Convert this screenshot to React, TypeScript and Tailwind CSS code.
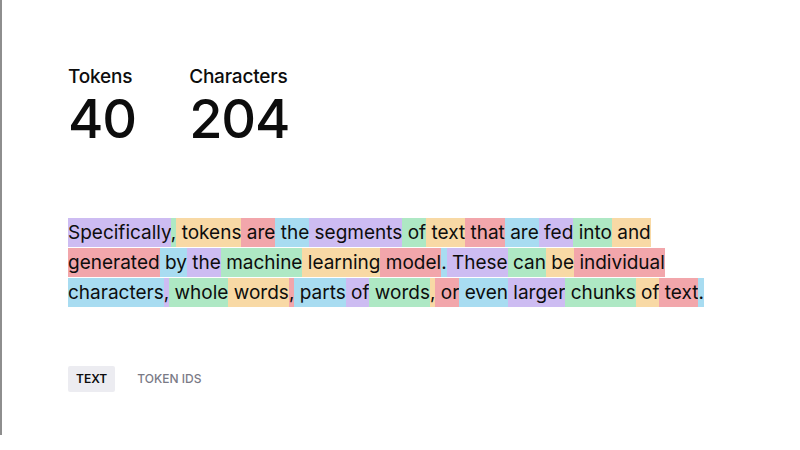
const COLORS = [
  "bg-[#cdbcf2]",
  "bg-[#aee8c4]",
  "bg-[#f8d9a5]",
  "bg-[#f2a6ab]",
  "bg-[#a8dcf1]",
];

const TOKENS = [
  "Specifically", ",", " tokens", " are", " the", " segments", " of", " text", " that", " are",
  " fed", " into", " and", " generated", " by", " the", " machine", " learning", " model", ".",
  " These", " can", " be", " individual", " characters", ",", " whole", " words", ",", " parts",
  " of", " words", ",", " or", " even", " larger", " chunks", " of", " text", ".",
];

function Stat({ label, value }: { label: string; value: string }) {
  return (
    <div className="flex flex-col">
      <span className="text-[19px] font-medium leading-[24px] tracking-[-0.01em]">{label}</span>
      <span className="text-[54px] font-medium leading-[60px] tracking-[-0.02em]">{value}</span>
    </div>
  );
}

export default function App() {
  return (
    <div
      className="h-[450px] w-[800px] bg-white text-[#0d0d0d]"
      style={{ fontFamily: "Inter, 'Liberation Sans', sans-serif" }}
    >
      <div className="h-[435px] border-l-2 border-[#8e8e8e] pl-[66px] pt-[65px]">
        <div className="flex gap-[53px]">
          <Stat label="Tokens" value="40" />
          <Stat label="Characters" value="204" />
        </div>

        <div className="mt-[69px] w-[660px] text-[19px] leading-[30px]">
          {TOKENS.map((t, i) => (
            <span key={i} className={COLORS[i % 5] + " py-[3px]"}>
              {t}
            </span>
          ))}
        </div>

        <div className="mt-[58px] flex gap-[14px] text-[12px] font-semibold">
          <button className="rounded-[2px] bg-[#ececf1] px-[8px] py-[4px] text-[#0d0d0d]">TEXT</button>
          <button className="px-[8px] py-[4px] font-medium text-[#7a7a86]">TOKEN IDS</button>
        </div>
      </div>
    </div>
  );
}
